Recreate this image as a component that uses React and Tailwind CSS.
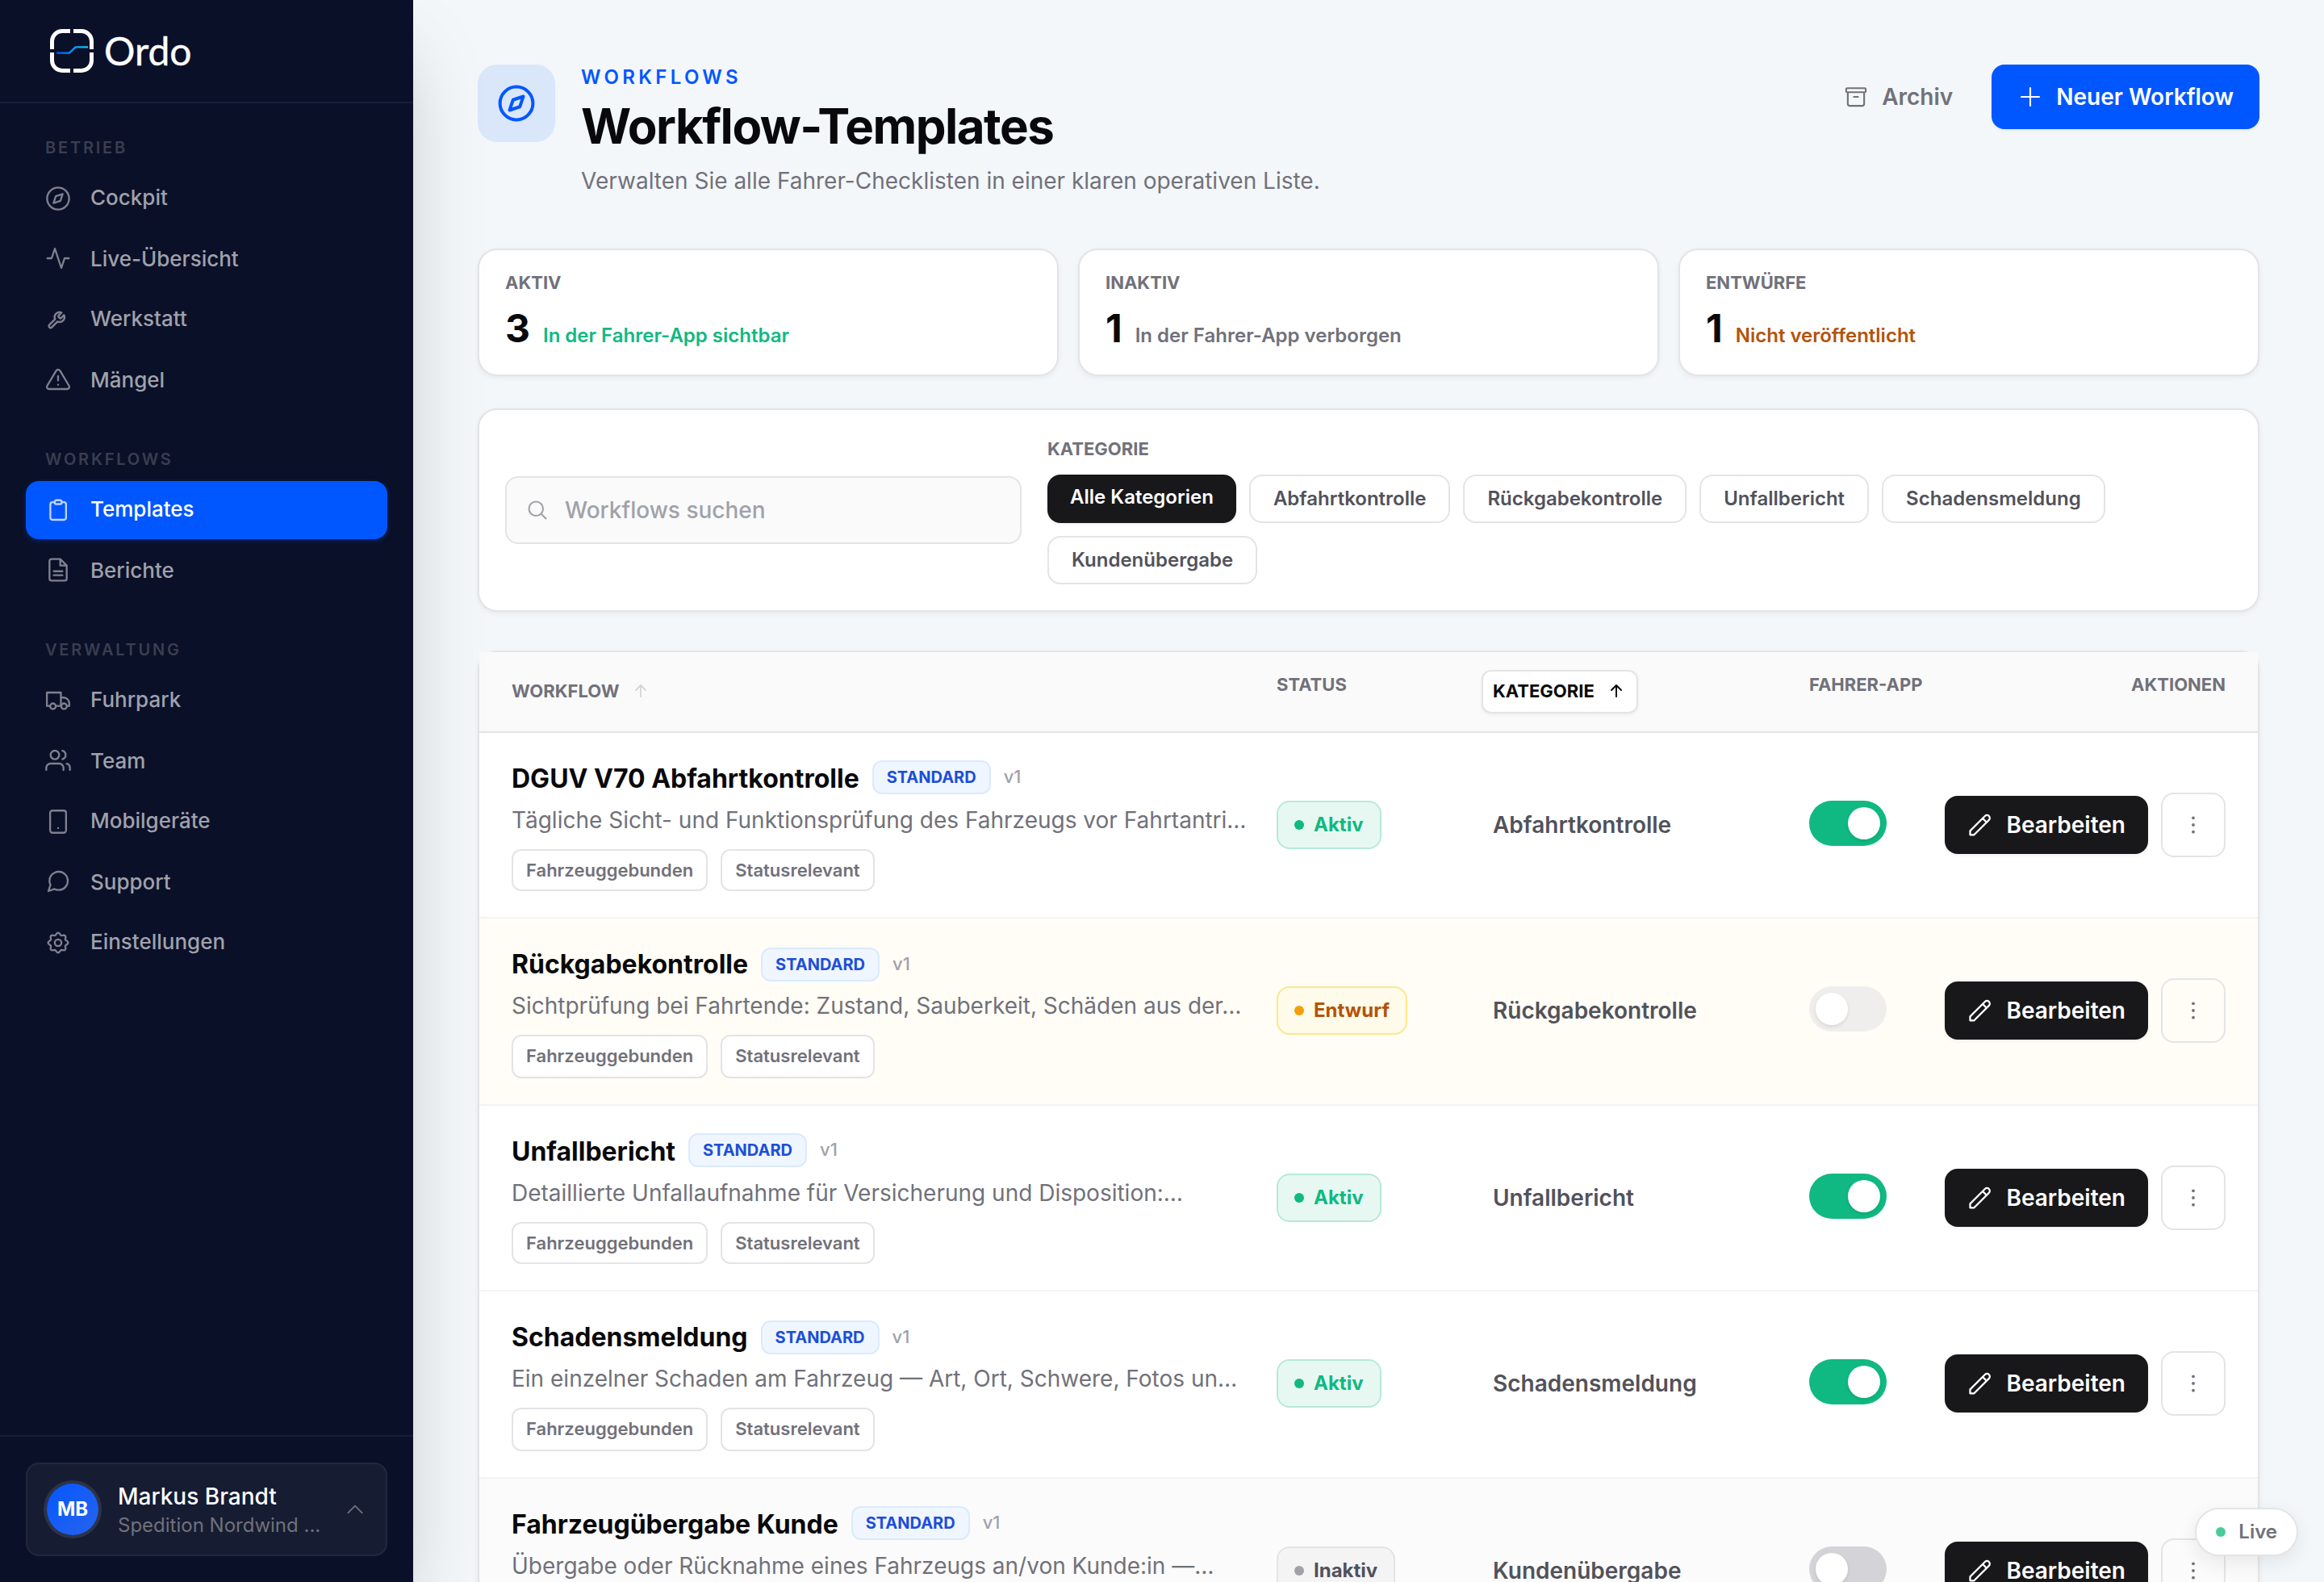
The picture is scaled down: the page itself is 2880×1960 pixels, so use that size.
import React, { useState } from 'react';

const gearPath = Array.from({ length: 97 }, (_, i) => {
  const t = (i / 96) * Math.PI * 2;
  const r = 8.3 + 0.95 * Math.cos(8 * t);
  return `${i === 0 ? 'M' : 'L'}${(12 + r * Math.cos(t)).toFixed(2)} ${(12 + r * Math.sin(t)).toFixed(2)}`;
}).join('') + 'Z';

const icons = {
  compass: (
    <>
      <circle cx="12" cy="12" r="10.2" />
      <path d="M16.24 7.76 14.12 14.12 7.76 16.24 9.88 9.88Z" />
    </>
  ),
  activity: <path d="M22 12h-4l-3 9L9 3l-3 9H2" />,
  wrench: (
    <path
      transform="translate(1.2 3.6) scale(.76)"
      strokeWidth="2.4"
      d="M14.7 6.3a1 1 0 0 0 0 1.4l1.6 1.6a1 1 0 0 0 1.4 0l3.77-3.77a6 6 0 0 1-7.94 7.94l-6.91 6.91a2.12 2.12 0 0 1-3-3l6.91-6.91a6 6 0 0 1 7.94-7.94l-3.76 3.76z"
    />
  ),
  alert: <path d="M10.29 3.86 1.82 18a2 2 0 0 0 1.71 3h16.94a2 2 0 0 0 1.71-3L13.71 3.86a2 2 0 0 0-3.42 0zM12 9v4M12 17h.01" />,
  clipboard: (
    <>
      <path d="M15.5 4.6h1.9a2 2 0 0 1 2 2V19a2 2 0 0 1-2 2H6.8a2 2 0 0 1-2-2V6.6a2 2 0 0 1 2-2h1.9" />
      <rect x="8.7" y="2.8" width="6.8" height="3.6" rx="1.8" />
    </>
  ),
  file: <path d="M14 2H6a2 2 0 0 0-2 2v16a2 2 0 0 0 2 2h12a2 2 0 0 0 2-2V8zM14 2v6h6M8 13.3h8M8 17h8" />,
  truck: (
    <>
      <path d="M4.6 17H1.6V4.5h13V17M14.6 17H10M14.6 9.2h2.6c3 0 5.2 2.6 5.2 5.6V17h-2.2" />
      <circle cx="7.2" cy="17.2" r="2.6" />
      <circle cx="17.5" cy="17.2" r="2.6" />
    </>
  ),
  users: (
    <>
      <path d="M17 21v-2a4 4 0 0 0-4-4H5a4 4 0 0 0-4 4v2M23 21v-2a4 4 0 0 0-3-3.87M16 3.13a4 4 0 0 1 0 7.75" />
      <circle cx="9" cy="7" r="4" />
    </>
  ),
  mobile: <path d="M6.8 1.7h10.4a2.2 2.2 0 0 1 2.2 2.2v16.2a2.2 2.2 0 0 1-2.2 2.2H6.8a2.2 2.2 0 0 1-2.2-2.2V3.9a2.2 2.2 0 0 1 2.2-2.2zM12 18h.01" />,
  chat: <path d="M21 11.5a8.38 8.38 0 0 1-.9 3.8 8.5 8.5 0 0 1-7.6 4.7 8.38 8.38 0 0 1-3.8-.9L3 21l1.9-5.7a8.38 8.38 0 0 1-.9-3.8 8.5 8.5 0 0 1 4.7-7.6 8.38 8.38 0 0 1 3.8-.9h.5a8.48 8.48 0 0 1 8 8v.5z" />,
  gear: (
    <>
      <path d={gearPath} />
      <circle cx="12" cy="12" r="3.1" />
    </>
  ),
  archive: <path d="M3.9 3.9h16.2a1 1 0 0 1 1 1v1.8a1 1 0 0 1-1 1H3.9a1 1 0 0 1-1-1V4.9a1 1 0 0 1 1-1zM4.4 7.7v10.6a2 2 0 0 0 2 2h11.2a2 2 0 0 0 2-2V7.7M10 12h4" />,
  plus: <path d="M12 3.75v16.5M3.75 12h16.5" />,
  search: <path d="m21 21-5.197-5.197m0 0A7.5 7.5 0 1 0 5.196 5.196a7.5 7.5 0 0 0 10.607 10.607Z" />,
  arrowUp: <path d="M12 19V5M6 11l6-6 6 6" />,
  chevronUp: <path d="m4.5 15.75 7.5-7.5 7.5 7.5" />,
  pencil: <path d="M2.6 21.2v-3.7L16.4 3.7a2.6 2.6 0 0 1 3.7 3.7L6.3 21.2ZM14.2 5.9l3.7 3.7" />,
};

function Icon({ name, className, strokeWidth = 1.6 }) {
  return (
    <svg
      viewBox="0 0 24 24"
      fill="none"
      stroke="currentColor"
      strokeWidth={strokeWidth}
      strokeLinecap="round"
      strokeLinejoin="round"
      className={`shrink-0 ${className}`}
    >
      {icons[name]}
    </svg>
  );
}

const navigation = [
  {
    title: 'BETRIEB',
    items: [
      { label: 'Cockpit', icon: 'compass' },
      { label: 'Live-Übersicht', icon: 'activity' },
      { label: 'Werkstatt', icon: 'wrench' },
      { label: 'Mängel', icon: 'alert' },
    ],
  },
  {
    title: 'WORKFLOWS',
    items: [
      { label: 'Templates', icon: 'clipboard', active: true },
      { label: 'Berichte', icon: 'file' },
    ],
  },
  {
    title: 'VERWALTUNG',
    items: [
      { label: 'Fuhrpark', icon: 'truck' },
      { label: 'Team', icon: 'users' },
      { label: 'Mobilgeräte', icon: 'mobile' },
      { label: 'Support', icon: 'chat' },
      { label: 'Einstellungen', icon: 'gear' },
    ],
  },
];

const stats = [
  { label: 'AKTIV', value: 3, hint: 'In der Fahrer-App sichtbar', color: 'text-[#10b981]' },
  { label: 'INAKTIV', value: 1, hint: 'In der Fahrer-App verborgen', color: 'text-[#71717a]' },
  { label: 'ENTWÜRFE', value: 1, hint: 'Nicht veröffentlicht', color: 'text-[#b45309]' },
];

const categories = [
  'Alle Kategorien',
  'Abfahrtkontrolle',
  'Rückgabekontrolle',
  'Unfallbericht',
  'Schadensmeldung',
  'Kundenübergabe',
];

const workflows = [
  {
    name: 'DGUV V70 Abfahrtkontrolle',
    description: 'Tägliche Sicht- und Funktionsprüfung des Fahrzeugs vor Fahrtantri…',
    status: 'Aktiv',
    category: 'Abfahrtkontrolle',
  },
  {
    name: 'Rückgabekontrolle',
    description: 'Sichtprüfung bei Fahrtende: Zustand, Sauberkeit, Schäden aus der…',
    status: 'Entwurf',
    category: 'Rückgabekontrolle',
  },
  {
    name: 'Unfallbericht',
    description: 'Detaillierte Unfallaufnahme für Versicherung und Disposition:…',
    status: 'Aktiv',
    category: 'Unfallbericht',
  },
  {
    name: 'Schadensmeldung',
    description: 'Ein einzelner Schaden am Fahrzeug — Art, Ort, Schwere, Fotos un…',
    status: 'Aktiv',
    category: 'Schadensmeldung',
  },
  {
    name: 'Fahrzeugübergabe Kunde',
    description: 'Übergabe oder Rücknahme eines Fahrzeugs an/von Kunde:in —…',
    status: 'Inaktiv',
    category: 'Kundenübergabe',
  },
];

const statusStyles = {
  Aktiv: {
    row: 'bg-white',
    badge: 'bg-[#e7f8f2] border-[#b7ead5] text-[#10b981]',
    dot: 'bg-[#10b981]',
    toggle: 'bg-[#10b981] justify-end',
  },
  Entwurf: {
    row: 'bg-[#fffdf6]',
    badge: 'bg-[#fffbeb] border-[#fde68a] text-[#b45309]',
    dot: 'bg-[#f59e0b]',
    toggle: 'bg-[#efeeec] justify-start',
  },
  Inaktiv: {
    row: 'bg-[#fbfbfb]',
    badge: 'bg-[#f4f4f5] border-[#e4e4e7] text-[#52525b]',
    dot: 'bg-[#a1a1aa]',
    toggle: 'bg-[#d4d4d8] justify-start',
  },
};

const columns = 'grid grid-cols-[916px_236px_360px_136px_348px] gap-x-8 px-10';

function Logo() {
  return (
    <div className="flex items-center h-[126px] pl-[62px] gap-[13px]">
      <svg viewBox="0 0 54 54" className="w-[54px] h-[54px]" fill="none" stroke="#fff" strokeWidth="5">
        <defs>
          <linearGradient id="flow" x1="8" y1="0" x2="47" y2="0" gradientUnits="userSpaceOnUse">
            <stop offset="0" stopColor="#0057ff" />
            <stop offset="1" stopColor="#00d4ff" />
          </linearGradient>
        </defs>
        <path d="M25 2.5H15A12.5 12.5 0 0 0 2.5 15V25" />
        <path d="M29 2.5H39A12.5 12.5 0 0 1 51.5 15V25" />
        <path d="M25 51.5H15A12.5 12.5 0 0 1 2.5 39V29" />
        <path d="M29 51.5H39A12.5 12.5 0 0 0 51.5 39V29" />
        <path d="M8 29.6H24L31.5 22.4H47" stroke="url(#flow)" strokeWidth="2.4" />
      </svg>
      <span className="font-[Lato,sans-serif] text-[48px] leading-none text-white [-webkit-text-stroke:0.4px_white]">
        Ordo
      </span>
    </div>
  );
}

function Sidebar() {
  return (
    <aside className="relative z-10 w-[512px] h-full shrink-0 flex flex-col bg-[#0a1028] shadow-[0_50px_100px_-24px_rgba(0,0,0,0.25)]">
      <div className="h-32 border-b-2 border-white/6">
        <Logo />
      </div>

      <nav className="flex-1 flex flex-col gap-[46px] pt-10 px-8">
        {navigation.map((section) => (
          <div key={section.title}>
            <p className="h-[30px] leading-[30px] pl-6 mb-3 text-[20px] font-semibold tracking-[0.14em] text-[#3a3e50]">
              {section.title}
            </p>
            {section.items.map((item) => (
              <a
                key={item.label}
                className={`group flex items-center h-[72px] px-6 gap-6 rounded-2xl text-[26px] font-medium even:not-last:mb-1 odd:not-last:mb-0.5 ${
                  item.active ? 'bg-[#0057ff] text-white shadow-[0_2px_6px_rgba(0,87,255,0.3)]' : 'text-[#a0a1ab]'
                }`}
              >
                <Icon
                  name={item.icon}
                  strokeWidth={1.75}
                  className={`w-8 h-8 group-odd:-mt-1 ${item.active ? 'text-[#c0d5ff]' : 'text-[#7f818f]'}`}
                />
                <span className="-mt-[3px]">{item.label}</span>
              </a>
            ))}
          </div>
        ))}
      </nav>

      <div className="border-t-2 border-white/6 px-8 py-8">
        <div className="flex items-center h-[116px] px-6 rounded-2xl border-2 border-white/5 bg-white/5">
          <div className="w-16 h-16 shrink-0 flex items-center justify-center rounded-full bg-linear-to-br from-[#0057ff] to-[#2563eb] ring-4 ring-white/10 text-[24px] font-bold text-white">
            MB
          </div>
          <div className="w-[260px] ml-6 mt-[5px]">
            <p className="text-[28px] leading-[35px] font-medium text-white">Markus Brandt</p>
            <p className="text-[24px] leading-9 text-[#71717a] whitespace-nowrap">Spedition Nordwind ...</p>
          </div>
          <Icon name="chevronUp" className="w-7 h-7 ml-auto text-[#71717a]" />
        </div>
      </div>
    </aside>
  );
}

function PageHeader() {
  return (
    <header className="flex items-start h-[228px]">
      <div className="w-24 h-24 flex items-center justify-center rounded-3xl bg-[#0057ff]/10 text-[#0057ff]">
        <Icon name="compass" strokeWidth={2} className="w-12 h-12" />
      </div>
      <div className="ml-8">
        <p className="h-8 leading-8 text-[24px] font-semibold tracking-[0.18em] text-[#0057ff]">WORKFLOWS</p>
        <h1 className="mt-2 h-[72px] leading-[72px] text-[60px] font-bold tracking-[-0.025em] text-[#09090b]">
          Workflow-Templates
        </h1>
        <p className="mt-2 h-12 leading-[48px] text-[28px] text-[#71717a]">
          Verwalten Sie alle Fahrer-Checklisten in einer klaren operativen Liste.
        </p>
      </div>
      <div className="ml-auto flex gap-4 text-[28px] font-semibold">
        <button className="flex items-center gap-4 h-20 px-8 text-[#71717a]">
          <Icon name="archive" className="w-8 h-8" />
          Archiv
        </button>
        <button className="flex items-center gap-4 h-20 px-8 rounded-2xl bg-[#0057ff] text-white shadow-[0_2px_4px_rgba(0,0,0,0.05)]">
          <Icon name="plus" className="w-8 h-8" />
          Neuer Workflow
        </button>
      </div>
    </header>
  );
}

function Filters({ category, onChange }) {
  return (
    <section className="mt-10 flex items-center gap-8 p-8 rounded-3xl border-2 border-[#e4e4e7] bg-white shadow-[0_2px_6px_rgba(0,0,0,0.06)]">
      <div className="w-[640px] h-[84px] shrink-0 flex items-center gap-5 px-6 rounded-2xl border-2 border-[#e4e4e7] bg-[#fafafa] text-[#a1a1aa]">
        <Icon name="search" strokeWidth={1.8} className="w-7 h-7" />
        <span className="text-[28px] font-medium">Workflows suchen</span>
      </div>
      <div>
        <p className="h-8 leading-8 text-[22px] font-bold text-[#71717a]">KATEGORIE</p>
        <div className="mt-4 flex flex-wrap gap-4">
          {categories.map((name) => (
            <button
              key={name}
              onClick={() => onChange(name)}
              className={`h-[60px] flex items-start pt-[10px] px-7 leading-9 rounded-2xl text-[24px] font-semibold ${
                category === name
                  ? 'bg-[#18181b] text-white shadow-[0_2px_4px_rgba(0,0,0,0.06)]'
                  : 'border-2 border-[#e4e4e7] bg-white text-[#52525b]'
              }`}
            >
              {name}
            </button>
          ))}
        </div>
      </div>
    </section>
  );
}

function WorkflowRow({ workflow, tall }) {
  const style = statusStyles[workflow.status];

  return (
    <div className={`${columns} items-center border-b-2 border-[#f4f4f5] ${tall ? 'h-[232px] pb-0.5' : 'h-[230px]'} ${style.row}`}>
      <div className="self-start pt-8">
        <div className="flex items-center gap-4 h-[46px]">
          <h2 className="mt-[3px] text-[32px] leading-[48px] font-bold text-[#09090b]">{workflow.name}</h2>
          <span className={`h-[42px] leading-[38px] px-4 rounded-xl border-2 border-[#dbeafe] bg-[#eff6ff] text-[20px] font-bold text-[#1d4ed8] ${tall ? 'mt-1' : ''}`}>
            STANDARD
          </span>
          <span className={`text-[22px] font-medium text-[#a1a1aa] ${tall ? 'mt-0.5' : '-mt-0.5'}`}>v1</span>
        </div>
        <p className="mt-2 leading-[44px] text-[28px] text-[#71717a] whitespace-nowrap">{workflow.description}</p>
        <div className="mt-[14px] flex gap-4 text-[22px] font-semibold text-[#71717a]">
          {['Fahrzeuggebunden', 'Statusrelevant'].map((tag) => (
            <span key={tag} className={`px-4 leading-[48px] rounded-xl border-2 border-[#e4e4e7] bg-white ${tall ? 'h-[54px]' : 'h-[52px]'}`}>
              {tag}
            </span>
          ))}
        </div>
      </div>
      <div className="flex">
        <span className={`flex items-center gap-3 h-[60px] px-5 rounded-2xl border-2 text-[24px] font-bold ${style.badge}`}>
          <i className={`w-3 h-3 rounded-full ${style.dot}`} />
          {workflow.status}
        </span>
      </div>
      <span className="text-[28px] font-semibold text-[#52525b]">{workflow.category}</span>
      <div className={`w-24 h-14 mb-1 flex items-center p-2 rounded-full ${style.toggle}`}>
        <i className="w-10 h-10 rounded-full bg-white shadow-[0_2px_4px_rgba(0,0,0,0.1)]" />
      </div>
      <div className="flex items-center justify-end gap-4">
        <button className="flex items-center gap-4 h-[72px] px-7 rounded-2xl bg-[#18181b] text-[28px] font-semibold text-white shadow-[0_2px_4px_rgba(0,0,0,0.06)]">
          <Icon name="pencil" strokeWidth={1.7} className="w-8 h-8" />
          Bearbeiten
        </button>
        <button className="w-20 h-20 flex items-center justify-center rounded-2xl border-2 border-[#e4e4e7] text-[#71717a]">
          <svg viewBox="0 0 32 32" fill="currentColor" className="w-8 h-8">
            <circle cx="16" cy="7.3" r="1.9" />
            <circle cx="16" cy="16" r="1.9" />
            <circle cx="16" cy="24.7" r="1.9" />
          </svg>
        </button>
      </div>
    </div>
  );
}

export default function App() {
  const [category, setCategory] = useState('Alle Kategorien');

  return (
    <div className="relative flex w-[2880px] h-[1960px] overflow-hidden bg-[#f3f7fa] font-[Inter,sans-serif] antialiased">
      <Sidebar />

      <main className="flex-1 h-full overflow-hidden px-20 pt-20">
        <PageHeader />

        <section className="grid grid-cols-3 gap-6">
          {stats.map((stat) => (
            <div key={stat.label} className="px-8 py-6 rounded-3xl border-2 border-[#e4e4e7] bg-white shadow-[0_2px_6px_rgba(0,0,0,0.06)]">
              <p className="h-8 leading-8 text-[22px] font-bold text-[#71717a]">{stat.label}</p>
              <div className="mt-2 h-[66px] leading-[66px] flex items-baseline gap-4">
                <span className="text-[48px] font-bold text-[#09090b]">{stat.value}</span>
                <span className={`text-[24px] font-semibold ${stat.color}`}>{stat.hint}</span>
              </div>
            </div>
          ))}
        </section>

        <Filters category={category} onChange={setCategory} />

        <section className="mt-12 rounded-3xl border-2 border-[#e4e4e7] bg-white shadow-[0_2px_6px_rgba(0,0,0,0.06)]">
          <div className={`${columns} h-[100px] pt-6 items-start border-b-2 border-[#e4e4e7] bg-[#fafafa] text-[22px] leading-8 font-bold text-[#71717a] whitespace-nowrap`}>
            <div className="flex items-center gap-[15px] h-[54px] -mt-0.5 pb-0.5">
              WORKFLOW
              <Icon name="arrowUp" strokeWidth={1.8} className="w-6 h-6 text-[#d4d4d8]" />
            </div>
            <span>STATUS</span>
            <div className="flex">
              <button className="flex items-center gap-[15px] h-[54px] -mt-0.5 -ml-[14px] pl-3 pr-[13px] pb-0.5 rounded-xl border-2 border-[#e4e4e7] bg-white text-[#09090b] shadow-[0_2px_4px_rgba(0,0,0,0.05)]">
                KATEGORIE
                <Icon name="arrowUp" strokeWidth={2} className="w-6 h-6" />
              </button>
            </div>
            <span>FAHRER-APP</span>
            <span className="text-right">AKTIONEN</span>
          </div>
          {workflows.map((workflow, i) => (
            <WorkflowRow key={workflow.name} workflow={workflow} tall={i % 2 === 1} />
          ))}
        </section>
      </main>

      <div className="absolute z-20 right-8 bottom-8 flex items-center gap-4 h-[60px] px-6 rounded-full border-2 border-[#e4e4e7] bg-white text-[24px] font-semibold text-[#71717a] shadow-[0_8px_24px_rgba(0,0,0,0.08)]">
        <i className="w-3 h-3 rounded-full bg-[#4acb9c]" />
        Live
      </div>
    </div>
  );
}
